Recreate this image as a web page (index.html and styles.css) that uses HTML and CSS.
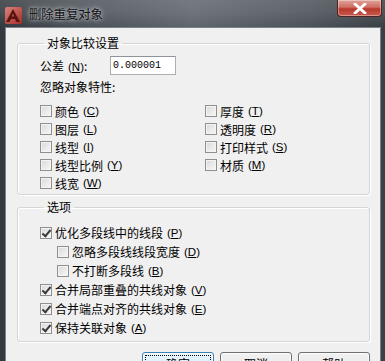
FILE: index.html
```html
<!DOCTYPE html>
<html lang="zh-CN">
<head>
  <meta charset="UTF-8" />
  <title>删除重复对象</title>
  <link rel="stylesheet" href="styles.css">
</head>
<body>
  <div class="window">
    <div class="titlebar">
      <svg class="app-icon" width="20" height="20" viewBox="0 0 20 20">
        <defs>
          <linearGradient id="ic" x1="0" y1="0" x2="1" y2="1">
            <stop offset="0" stop-color="#e88a80"/>
            <stop offset="1" stop-color="#b22a22"/>
          </linearGradient>
        </defs>
        <path d="M2 4 Q2 2 4 2 L17 2 Q19 2 19 4 L19 17 Q19 19 17 19 L4 19 Q2 19 2 17 Z" fill="url(#ic)" opacity="0.9"/>
        <path d="M10 4 L17 17 L13.5 17 L12 14 L8 14 L6.5 17 L3 17 Z M10 8.5 L8.8 11.5 L11.2 11.5 Z" fill="#5a1410"/>
      </svg>
      <span class="title">删除重复对象</span>
      <div class="close">
        <svg width="14" height="11" viewBox="0 0 14 11">
          <path d="M2 1 L12 10 M12 1 L2 10" stroke="#fff" stroke-width="3" stroke-linecap="round"/>
        </svg>
      </div>
    </div>

    <div class="client">
      <fieldset class="group">
        <legend>对象比较设置</legend>
        <div class="tol-row">
          <span class="tol-label">公差<span class="key">(<u>N</u>)</span>:</span>
          <div class="textbox">0.000001</div>
        </div>
        <div class="hint">忽略对象特性:</div>
        <div class="props">
          <div class="col">
            <label class="check"><span class="box"></span>颜色<span class="key">(<u>C</u>)</span></label>
            <label class="check"><span class="box"></span>图层<span class="key">(<u>L</u>)</span></label>
            <label class="check"><span class="box"></span>线型<span class="key">(<u>I</u>)</span></label>
            <label class="check"><span class="box"></span>线型比例<span class="key">(<u>Y</u>)</span></label>
            <label class="check"><span class="box"></span>线宽<span class="key">(<u>W</u>)</span></label>
          </div>
          <div class="col">
            <label class="check"><span class="box"></span>厚度<span class="key">(<u>T</u>)</span></label>
            <label class="check"><span class="box"></span>透明度<span class="key">(<u>R</u>)</span></label>
            <label class="check"><span class="box"></span>打印样式<span class="key">(<u>S</u>)</span></label>
            <label class="check"><span class="box"></span>材质<span class="key">(<u>M</u>)</span></label>
          </div>
        </div>
      </fieldset>

      <fieldset class="group options">
        <legend>选项</legend>
        <label class="check"><span class="box checked"></span>优化多段线中的线段<span class="key">(<u>P</u>)</span></label>
        <label class="check sub"><span class="box"></span>忽略多段线线段宽度<span class="key">(<u>D</u>)</span></label>
        <label class="check sub"><span class="box"></span>不打断多段线<span class="key">(<u>B</u>)</span></label>
        <label class="check"><span class="box checked"></span>合并局部重叠的共线对象<span class="key">(<u>V</u>)</span></label>
        <label class="check"><span class="box checked"></span>合并端点对齐的共线对象<span class="key">(<u>E</u>)</span></label>
        <label class="check"><span class="box checked"></span>保持关联对象<span class="key">(<u>A</u>)</span></label>
      </fieldset>

      <div class="buttons">
        <button class="btn default">确定</button>
        <button class="btn">取消</button>
        <button class="btn">帮助</button>
      </div>
    </div>
  </div>
</body>
</html>
```

FILE: styles.css
```css
body {
  margin: 0;
  background: #3b4046;
  font-family: "Noto Sans CJK SC", "Liberation Sans", sans-serif;
  font-size: 12px;
  color: #000;
}
.window {
  width: 385px;
  height: 361px;
  overflow: hidden;
  box-sizing: border-box;
  padding: 0 4px 0 5px;
  background: linear-gradient(90deg, #33383e 0%, #4a5057 20%, #5f656c 50%, #4c5259 80%, #3a3f45 100%);
}
.titlebar {
  height: 27px;
  display: flex;
  align-items: center;
  margin: 0 -4px 0 -5px;
  padding-left: 3px;
  background: linear-gradient(180deg, rgba(255,255,255,0.14) 0%, rgba(255,255,255,0.1) 45%, rgba(0,0,0,0) 100%);
}
.app-icon {
  flex: none;
  margin-top: 3px;
}
.title {
  margin-left: 6px;
  margin-top: 1px;
  font-size: 12.3px;
  color: #111;
  text-shadow: 0 0 6px rgba(215,220,226,0.9), 0 0 3px rgba(215,220,226,0.7);
}
.close {
  margin-left: auto;
  margin-right: 3px;
  align-self: flex-start;
  width: 45px;
  height: 17px;
  box-sizing: border-box;
  border: 1px solid #4d2522;
  border-top: none;
  border-radius: 0 0 4px 4px;
  background: linear-gradient(180deg, #e0a49c 0%, #cf6d62 45%, #b8382d 55%, #c75a4c 100%);
  box-shadow: inset 0 0 0 1px rgba(255,255,255,0.35);
  display: flex;
  align-items: center;
  justify-content: center;
}
.client {
  background: #f0f0f0;
  border: 1px solid #7b8188;
  height: 340px;
  padding: 7px 10px 0 11px;
}
.group {
  margin: 0;
  padding: 5px 0 2px 22px;
  border: 1px solid #d5d5d5;
  border-radius: 3px;
  box-shadow: inset 1px 1px 0 #fff, 1px 1px 0 #fff;
}
.group legend {
  padding: 0 3px;
  margin-left: 4px;
  line-height: 16px;
}
.tol-row {
  display: flex;
  align-items: center;
  height: 19px;
}
.tol-label {
  width: 70px;
}
.key {
  margin-left: 4px;
  font-family: "Liberation Sans", sans-serif;
  font-size: 11.5px;
}
.textbox {
  width: 66px;
  height: 19px;
  box-sizing: border-box;
  border: 1px solid #abadb3;
  border-top-color: #8f939a;
  background: #fff;
  padding-left: 2px;
  font-family: "Liberation Mono", monospace;
  font-size: 10px;
  line-height: 17px;
}
.hint {
  line-height: 18px;
  margin-top: 3px;
}
.props {
  display: flex;
  margin-top: 6px;
}
.props .col:first-child {
  width: 165px;
}
.check {
  display: flex;
  align-items: center;
  height: 18px;
  white-space: nowrap;
}
.box {
  width: 12px;
  height: 12px;
  box-sizing: border-box;
  border: 1px solid #8e8f8f;
  background: linear-gradient(135deg, #d8d8d8 0%, #ececec 60%, #f6f6f6 100%);
  box-shadow: inset 0 0 0 1px #f4f4f4;
  margin-right: 3px;
  flex: none;
  position: relative;
}
.box.checked::after {
  content: "";
  position: absolute;
  left: 3px;
  top: 0px;
  width: 3px;
  height: 7px;
  border: solid #3a3a3a;
  border-width: 0 2px 2px 0;
  transform: rotate(40deg);
}
.options {
  margin-top: 4px;
  padding-top: 8px;
  padding-bottom: 4px;
}
.options .check {
  height: 19px;
}
.options .check.sub {
  padding-left: 17px;
}
.buttons {
  display: flex;
  justify-content: flex-end;
  gap: 6px;
  margin-top: 10px;
}
.btn {
  width: 72px;
  height: 23px;
  font-family: inherit;
  font-size: 12px;
  border: 1px solid #707070;
  border-radius: 3px;
  background: linear-gradient(180deg, #f2f2f2 0%, #ebebeb 50%, #dddddd 51%, #cfcfcf 100%);
  box-shadow: inset 0 0 0 1px #fbfbfb;
  padding: 0;
}
.btn.default {
  border-color: #3c7fb1;
  background: linear-gradient(180deg, #eaf6fd 0%, #d9f0fc 50%, #bee6fd 51%, #a7d9f5 100%);
  outline: 1px dotted #000;
  outline-offset: -4px;
}
```
